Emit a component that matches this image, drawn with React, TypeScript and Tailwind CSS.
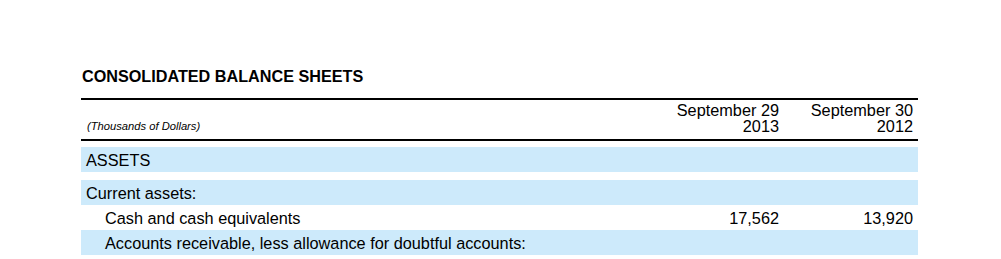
import React from 'react';

type Row = {
  label: string;
  indent?: boolean;
  shaded?: boolean;
  gapAfter?: boolean;
  y2013?: string;
  y2012?: string;
};

const ROWS: Row[] = [
  { label: 'ASSETS', shaded: true, gapAfter: true },
  { label: 'Current assets:', shaded: true },
  { label: 'Cash and cash equivalents', indent: true, y2013: '17,562', y2012: '13,920' },
  { label: 'Accounts receivable, less allowance for doubtful accounts:', indent: true, shaded: true },
];

const App: React.FC = () => {
  return (
    <div className="w-[1001px] h-[259px] overflow-hidden bg-white text-black font-['Liberation_Sans',Arial,sans-serif]">
      <div className="ml-[81px] w-[837px] pt-[67px]">
        {/* Title */}
        <div className="text-[16.2px] leading-[18px] font-bold pl-px">CONSOLIDATED BALANCE SHEETS</div>

        {/* Column header */}
        <div className="mt-[13px] border-t-2 border-black flex items-end">
          <div className="flex-1 text-[11.2px] leading-[14px] italic pl-[6px] pb-[6px]">(Thousands of Dollars)</div>
          <div className="w-[134px] text-right text-[16.3px] leading-[16px] pr-[5px] pt-[2px] pb-[5px]">
            <div>September 29</div>
            <div>2013</div>
          </div>
          <div className="w-[134px] text-right text-[16.3px] leading-[16px] pr-[5px] pt-[2px] pb-[5px]">
            <div>September 30</div>
            <div>2012</div>
          </div>
        </div>
        <div className="border-t-2 border-black" />

        {/* Body rows */}
        <div className="pt-[6px]">
          {ROWS.map((r) => (
            <div
              key={r.label}
              className={`flex items-center h-[25px] text-[16.3px] leading-[18px] ${r.shaded ? 'bg-[#cdeafb]' : 'bg-white'} ${r.gapAfter ? 'mb-[8px]' : ''}`}
            >
              <div className={`flex-1 ${r.indent ? 'pl-[24px]' : 'pl-[5px]'}`}>{r.label}</div>
              <div className="w-[134px] text-right pr-[5px]">{r.y2013 ?? ''}</div>
              <div className="w-[134px] text-right pr-[5px]">{r.y2012 ?? ''}</div>
            </div>
          ))}
        </div>
      </div>
    </div>
  );
};

export default App;
